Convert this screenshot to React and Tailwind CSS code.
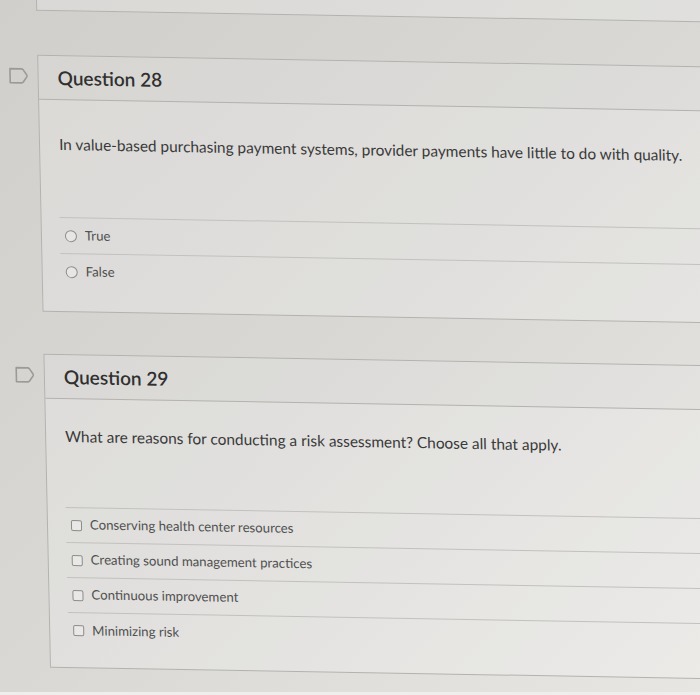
import { Fragment } from "react";

const questions = [
  {
    id: 28,
    text: "In value-based purchasing payment systems, provider payments have little to do with quality.",
    type: "radio",
    textPad: "pt-[33px]",
    listGap: "mt-[62px]",
    rowH: "h-[36px]",
    bottomPad: "pb-[21px]",
    answers: ["True", "False"],
  },
  {
    id: 29,
    text: "What are reasons for conducting a risk assessment? Choose all that apply.",
    type: "checkbox",
    textPad: "pt-[26px]",
    listGap: "mt-[60px]",
    rowH: "h-[35px]",
    bottomPad: "pb-[19px]",
    answers: [
      "Conserving health center resources",
      "Creating sound management practices",
      "Continuous improvement",
      "Minimizing risk",
    ],
  },
];

function Flag() {
  return (
    <svg width="20" height="17" viewBox="0 0 20 17" fill="none">
      <path
        d="M1.5 1.5 H13 Q14 1.5 14.6 2.3 L18.2 7.6 Q18.7 8.5 18.2 9.4 L14.6 14.7 Q14 15.5 13 15.5 H1.5 Z"
        stroke="#9b9a97"
        strokeWidth="1.6"
        strokeLinejoin="round"
      />
    </svg>
  );
}

function Marker({ type }) {
  if (type === "radio") {
    return (
      <span className="block w-[12px] h-[12px] rounded-full border-[1.5px] border-[#8d8c89] bg-white/30" />
    );
  }
  return (
    <span className="block w-[11px] h-[11px] rounded-[2px] border border-[#8d8c89] bg-white/30" />
  );
}

function QuestionCard({ q, top }) {
  return (
    <div className={`flex ${top}`}>
      <div className="w-[36px] shrink-0 pl-[7px] pt-[13px]">
        <Flag />
      </div>
      <div className="flex-1 border border-[#b3b2af] bg-white/20">
        <div className="h-[44px] flex items-center px-[19px] bg-black/[0.015] border-b border-[#b3b2af]">
          <h2 className="text-[19px] font-semibold text-[#303030] leading-none">
            Question {q.id}
          </h2>
        </div>
        <div className={`${q.textPad} ${q.bottomPad}`}>
          <p className="px-[19px] text-[15.4px] leading-[22px] text-[#3a3a3a] whitespace-nowrap">
            {q.text}
          </p>
          <ul className={`${q.listGap} ml-[18px] border-t border-[#c2c1be]`}>
            {q.answers.map((a, i) => (
              <li
                key={a}
                className={`${q.rowH} flex items-center gap-[8px] pl-[5px] text-[13.2px] text-[#505050] ${
                  i < q.answers.length - 1 ? "border-b border-[#c2c1be]" : ""
                }`}
              >
                <Marker type={q.type} />
                <span>{a}</span>
              </li>
            ))}
          </ul>
        </div>
      </div>
    </div>
  );
}

export default function App() {
  return (
    <div className="relative w-[700px] h-[695px] overflow-hidden bg-linear-to-br from-[#d1cfcc] via-[#d9d8d5] to-[#e7e6e3] font-[Lato,sans-serif]">
      <div className="w-[760px] origin-top-left skew-x-[1.2deg] skew-y-[1deg]">
        <div className="flex">
          <div className="w-[36px] shrink-0" />
          <div className="flex-1 h-[40px] -mt-[30px] border-x border-b border-[#b3b2af] bg-white/20" />
        </div>
        {questions.map((q, i) => (
          <Fragment key={q.id}>
            <QuestionCard q={q} top={i === 0 ? "mt-[44px]" : "mt-[42px]"} />
          </Fragment>
        ))}
      </div>
      <div className="absolute bottom-0 left-0 right-0 h-[3px] bg-[#efeeec]" />
    </div>
  );
}
